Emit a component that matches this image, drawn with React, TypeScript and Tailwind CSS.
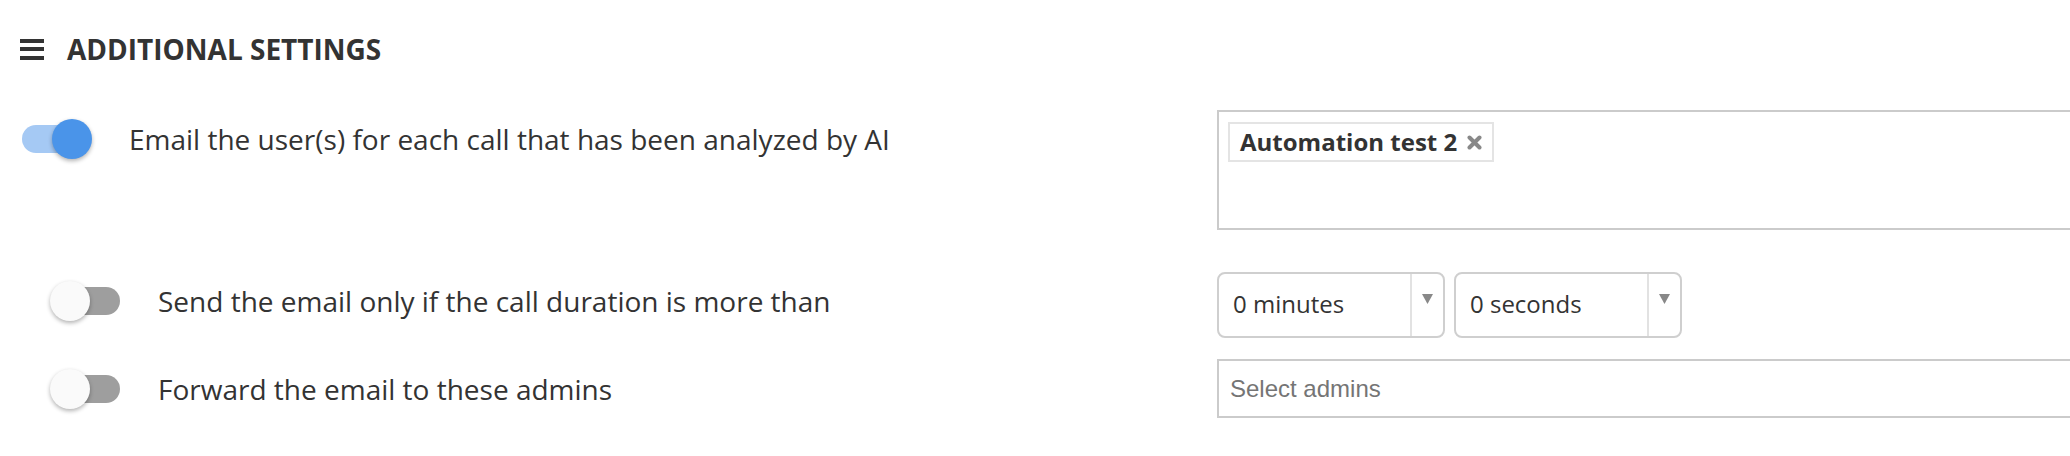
const Toggle = ({ on }: { on: boolean }) => {
  return (
    <div className="relative w-[66px] h-[40px] flex items-center shrink-0">
      <div
        className={
          on
            ? "w-full h-[28px] rounded-full bg-[#a5c9f4]"
            : "w-full h-[28px] rounded-full bg-[#9e9e9e]"
        }
      />
      <div
        className={
          on
            ? "absolute top-0 right-[-4px] size-[40px] rounded-full bg-[#4a94e9] shadow-[0_2px_4px_rgba(0,0,0,0.3)]"
            : "absolute top-0 left-[-4px] size-[40px] rounded-full bg-[#fafafa] shadow-[0_2px_4px_rgba(0,0,0,0.3)]"
        }
      />
    </div>
  );
};

const Dropdown = ({ value }: { value: string }) => {
  return (
    <div className="flex w-[228px] h-[66px] border-2 border-[#cfcfcf] rounded-[8px]">
      <div className="flex-1 flex items-center pl-[14px] pb-[3px] text-[24px] text-[#333]">
        {value}
      </div>
      <div className="w-[33px] border-l-2 border-[#e2e2e2] flex justify-center pt-[20px]">
        <svg width="11" height="10" viewBox="0 0 11 10">
          <polygon points="0,0 11,0 5.5,10" fill="#888" />
        </svg>
      </div>
    </div>
  );
};

export default function App() {
  return (
    <div className="w-[2070px] h-[456px] overflow-hidden bg-white pt-[29px] font-['Open_Sans',sans-serif] text-[#333]">
      {/* header */}
      <div className="flex items-center h-[40px] pl-[20px]">
        <div className="flex flex-col gap-[4.5px] w-[24px]">
          <span className="block h-[4px] bg-[#333]" />
          <span className="block h-[4px] bg-[#333]" />
          <span className="block h-[4px] bg-[#333]" />
        </div>
        <h1 className="ml-[23px] text-[28px] font-bold leading-[40px]">ADDITIONAL SETTINGS</h1>
      </div>

      {/* email users */}
      <div className="grid grid-cols-[1217px_1fr] mt-[41px]">
        <div className="flex items-start pl-[22px] pt-[9px]">
          <Toggle on={true} />
          <span className="ml-[41px] text-[28px] leading-[40px]">
            Email the user(s) for each call that has been analyzed by AI
          </span>
        </div>
        <div className="w-[900px] h-[120px] border-2 border-[#cbcbcb] pl-[9px] pt-[10px]">
          <div className="inline-flex items-center h-[40px] border-2 border-[#e4e4e4] px-[10px] gap-[10px]">
            <span className="text-[24px] font-bold">Automation test 2</span>
            <svg width="15" height="15" viewBox="0 0 15 15">
              <path d="M2.5 2.5 L12.5 12.5 M12.5 2.5 L2.5 12.5" stroke="#888" strokeWidth="4" strokeLinecap="round" />
            </svg>
          </div>
        </div>
      </div>

      {/* duration */}
      <div className="grid grid-cols-[1217px_1fr] mt-[42px]">
        <div className="flex items-start pl-[54px] pt-[9px]">
          <Toggle on={false} />
          <span className="ml-[38px] text-[28px] leading-[40px]">
            Send the email only if the call duration is more than
          </span>
        </div>
        <div className="flex gap-[9px]">
          <Dropdown value="0 minutes" />
          <Dropdown value="0 seconds" />
        </div>
      </div>

      {/* admins */}
      <div className="grid grid-cols-[1217px_1fr] mt-[21px]">
        <div className="flex items-start pl-[54px] pt-[10px]">
          <Toggle on={false} />
          <span className="ml-[38px] text-[28px] leading-[40px]">Forward the email to these admins</span>
        </div>
        <div className="w-[900px] h-[59px] border-2 border-[#cbcbcb] pl-[11px] flex items-center font-['Liberation_Sans',Arial,sans-serif] text-[24px] text-[#757575]">
          Select admins
        </div>
      </div>
    </div>
  );
}
